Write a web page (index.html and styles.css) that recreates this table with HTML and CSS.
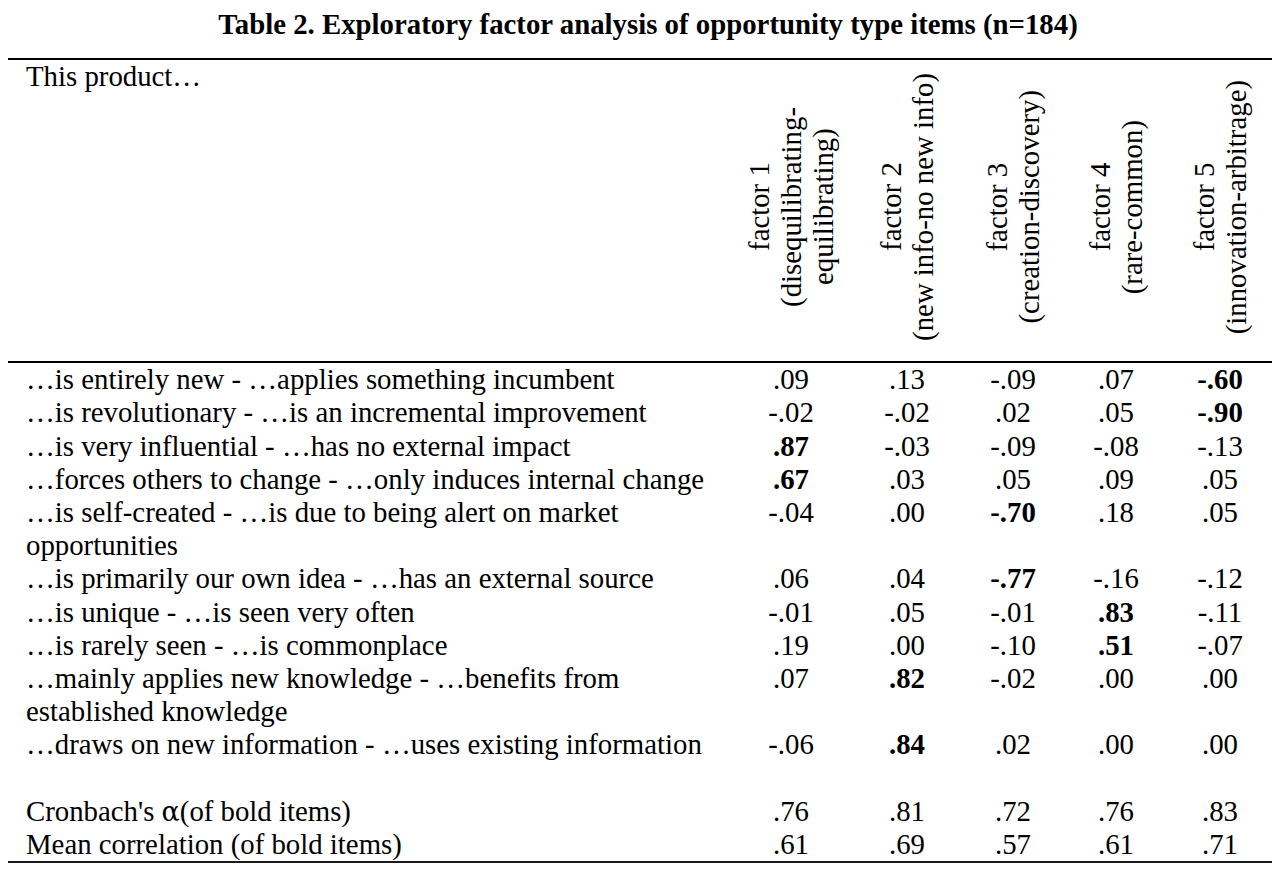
FILE: index.html
```html
<!DOCTYPE html>
<html lang="en">
<head>
<meta charset="utf-8">
<title>Table 2. Exploratory factor analysis of opportunity type items</title>
<link rel="stylesheet" href="styles.css">
</head>
<body>
<h1 class="title">Table 2. Exploratory factor analysis of opportunity type items (n=184)</h1>
<table class="efa">
  <colgroup>
    <col class="c-stub">
    <col class="c-f1">
    <col class="c-f2">
    <col class="c-f3">
    <col class="c-f4">
    <col class="c-f5">
  </colgroup>
  <thead>
    <tr>
      <th class="stub-head">This product…</th>
      <th class="factor"><span class="rot">factor 1<br>(disequilibrating-<br>equilibrating)</span></th>
      <th class="factor"><span class="rot">factor 2<br>(new info-no new info)</span></th>
      <th class="factor"><span class="rot">factor 3<br>(creation-discovery)</span></th>
      <th class="factor"><span class="rot">factor 4<br>(rare-common)</span></th>
      <th class="factor"><span class="rot">factor 5<br>(innovation-arbitrage)</span></th>
    </tr>
  </thead>
  <tbody>
    <tr><td class="item">…is entirely new - …applies something incumbent</td><td>.09</td><td>.13</td><td>-.09</td><td>.07</td><td class="b">-.60</td></tr>
    <tr><td class="item">…is revolutionary - …is an incremental improvement</td><td>-.02</td><td>-.02</td><td>.02</td><td>.05</td><td class="b">-.90</td></tr>
    <tr><td class="item">…is very influential - …has no external impact</td><td class="b">.87</td><td>-.03</td><td>-.09</td><td>-.08</td><td>-.13</td></tr>
    <tr><td class="item">…forces others to change - …only induces internal change</td><td class="b">.67</td><td>.03</td><td>.05</td><td>.09</td><td>.05</td></tr>
    <tr><td class="item">…is self-created - …is due to being alert on market<br>opportunities</td><td>-.04</td><td>.00</td><td class="b">-.70</td><td>.18</td><td>.05</td></tr>
    <tr><td class="item">…is primarily our own idea - …has an external source</td><td>.06</td><td>.04</td><td class="b">-.77</td><td>-.16</td><td>-.12</td></tr>
    <tr><td class="item">…is unique - …is seen very often</td><td>-.01</td><td>.05</td><td>-.01</td><td class="b">.83</td><td>-.11</td></tr>
    <tr><td class="item">…is rarely seen - …is commonplace</td><td>.19</td><td>.00</td><td>-.10</td><td class="b">.51</td><td>-.07</td></tr>
    <tr><td class="item">…mainly applies new knowledge - …benefits from<br>established knowledge</td><td>.07</td><td class="b">.82</td><td>-.02</td><td>.00</td><td>.00</td></tr>
    <tr><td class="item">…draws on new information - …uses existing information</td><td>-.06</td><td class="b">.84</td><td>.02</td><td>.00</td><td>.00</td></tr>
    <tr class="spacer"><td class="item">&nbsp;</td><td></td><td></td><td></td><td></td><td></td></tr>
    <tr><td class="item">Cronbach's <span class="alpha">α</span>(of bold items)</td><td>.76</td><td>.81</td><td>.72</td><td>.76</td><td>.83</td></tr>
    <tr><td class="item">Mean correlation (of bold items)</td><td>.61</td><td>.69</td><td>.57</td><td>.61</td><td>.71</td></tr>
  </tbody>
</table>
</body>
</html>
```

FILE: styles.css
```css
html, body {
  background: #ffffff;
}

body {
  margin: 8px;
  color: #000000;
  font-family: "Liberation Serif", "Times New Roman", serif;
  font-size: 28.8px;
  line-height: 33.2px;
}

.title {
  margin: 0 0 17px 0;
  padding-left: 16px;
  text-align: center;
  font-size: 28.8px;
  line-height: 33.2px;
  font-weight: bold;
}

.efa {
  width: 1264px;
  border-collapse: collapse;
  table-layout: fixed;
  border-top: 2px solid #000000;
  border-bottom: 2px solid #1a1a1a;
}

.c-stub { width: 722px; }
.c-f1 { width: 122px; }
.c-f2 { width: 110px; }
.c-f3 { width: 102px; }
.c-f4 { width: 104px; }
.c-f5 { width: 104px; }

.efa thead tr {
  height: 303px;
  border-bottom: 2px solid #000000;
}

.efa th {
  padding: 0;
  font-weight: normal;
}

.stub-head {
  text-align: left;
  vertical-align: top;
  padding-left: 18px !important;
}

.factor {
  vertical-align: middle;
  text-align: center;
}

.rot {
  display: inline-block;
  writing-mode: vertical-rl;
  transform: rotate(180deg);
  text-align: center;
  line-height: 32px;
  white-space: nowrap;
}

.efa td {
  padding: 0;
  text-align: center;
  vertical-align: top;
  white-space: nowrap;
}

.efa td.item {
  text-align: left;
  padding-left: 18px;
}

.efa td.b {
  font-weight: bold;
}

.alpha {
  font-family: "DejaVu Serif", "Liberation Serif", serif;
  font-size: 27px;
}
```
